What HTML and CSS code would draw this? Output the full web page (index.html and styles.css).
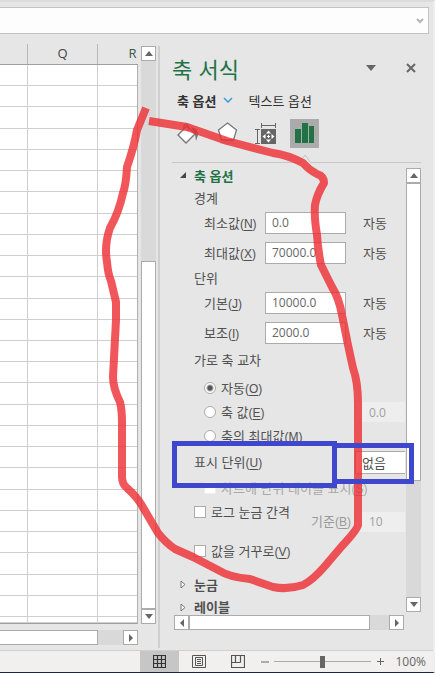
FILE: index.html
```html
<!DOCTYPE html>
<html lang="ko">
<head>
    <meta charset="UTF-8">
    <meta name="viewport" content="width=device-width, initial-scale=1.0">
    <title>축 서식</title>
    <link rel="stylesheet" href="styles.css">
</head>
<body>

    <div class="formula-bar">
        <input type="text" class="formula-input" aria-label="수식 입력줄">
        <button class="formula-toggle" aria-label="수식 입력줄 확장">
            <svg width="8" height="6" viewBox="0 0 8 6"><path d="M1 1l3 3 3-3" fill="none" stroke="#b4b4b4" stroke-width="2"/></svg>
        </button>
    </div>

    <div class="workspace">
        <div class="sheet">
            <div class="sheet-head">
                <span></span>
                <span>Q</span>
                <span class="active">R</span>
            </div>
            <div class="cells" id="cells"></div>
            <div class="scroll-x sheet-scroll-x">
                <div class="thumb sheet-thumb-x"></div>
                <button class="scroll-btn" aria-label="오른쪽"><svg width="6" height="8" viewBox="0 0 6 8"><path d="M1 0l4 4-4 4z"/></svg></button>
            </div>
        </div>

        <div class="scroll-y sheet-scroll-y">
            <button class="scroll-btn" aria-label="위로"><svg width="8" height="5" viewBox="0 0 8 5"><path d="M0 5l4-5 4 5z"/></svg></button>
            <div class="track-space"></div>
            <div class="thumb sheet-thumb-y"></div>
            <button class="scroll-btn" aria-label="아래로"><svg width="8" height="5" viewBox="0 0 8 5"><path d="M0 0l4 5 4-5z"/></svg></button>
        </div>

        <div class="pane">
            <div class="pane-title">
                <h1>축 서식</h1>
                <button class="plain" aria-label="작업창 옵션"><svg width="10" height="6" viewBox="0 0 10 6"><path d="M0 0h10l-5 6z" fill="#666"/></svg></button>
                <button class="plain" aria-label="닫기"><svg width="10" height="10" viewBox="0 0 10 10"><path d="M1 1l8 8M9 1l-8 8" stroke="#666" stroke-width="2"/></svg></button>
            </div>

            <div class="tabs">
                <button class="plain tab selected">축 옵션
                    <svg width="10" height="6" viewBox="0 0 10 6"><path d="M1 1l4 4 4-4" fill="none" stroke="#3c9bd6" stroke-width="1.5"/></svg>
                </button>
                <button class="plain tab">텍스트 옵션</button>
            </div>

            <div class="icons">
                <button class="plain icon" aria-label="채우기 및 선">
                    <svg width="25" height="25" viewBox="0 0 25 25">
                        <path d="M3 14l9-9 8 8-9 9z" fill="#fff" stroke="#777" stroke-width="1.4"/>
                        <path d="M9 8V5q2-4 4 0v5" fill="none" stroke="#777" stroke-width="1.2"/>
                        <path d="M16 6q8 2 7 8l-2 6-1-7z" fill="#777"/>
                    </svg>
                </button>
                <button class="plain icon" aria-label="효과">
                    <svg width="25" height="25" viewBox="0 0 25 25">
                        <path d="M13.500 2l9 7-3 10h-12l-3-10z" fill="#fff" stroke="#777" stroke-width="1.3"/>
                        <path d="M7 20h13l1 3H6z" fill="#cfcfcf"/>
                    </svg>
                </button>
                <button class="plain icon" aria-label="크기 및 속성">
                    <svg width="25" height="25" viewBox="0 0 25 25">
                        <path d="M8 4.500h14M8.500 2v5M22.500 2v5M4.500 9v13M2 8.500h5M2 22.500h5" fill="none" stroke="#666"/>
                        <path d="M8 8h15v15H8z" fill="#666"/>
                        <path d="M15.500 9.500l2.500 3h-5zM15.500 21.500l2.500-3h-5zM9.500 15.500l3-2.500v5zM21.500 15.500l-3-2.500v5z" fill="#fff"/>
                        <path d="M15.500 14v3M14 15.500h3" stroke="#fff"/>
                    </svg>
                </button>
                <button class="plain icon current" aria-label="축 옵션">
                    <svg width="21" height="23" viewBox="0 0 21 23"><path d="M1 7h6v14H1zM8 1h6v20H8zM15 4h5v17h-5z" fill="#217346"/></svg>
                    <svg class="notch" width="14" height="9" viewBox="0 0 14 9"><path d="M1 9l6-8 6 8" fill="#e6e6e6" stroke="#c6c6c6"/></svg>
                </button>
            </div>

            <div class="pane-body">
                <div class="options">
                    <h2 class="section open"><svg width="7" height="7" viewBox="0 0 7 7"><path d="M6 0v6H0z" fill="#444"/></svg>축 옵션</h2>

                    <h3>경계</h3>
                    <div class="field">
                        <label for="min">최소값<span class="key">(<u>N</u>)</span></label>
                        <input type="text" id="min" value="0.0">
                        <span class="mode">자동</span>
                    </div>
                    <div class="field">
                        <label for="max">최대값<span class="key">(<u>X</u>)</span></label>
                        <input type="text" id="max" value="70000.0">
                        <span class="mode">자동</span>
                    </div>

                    <h3>단위</h3>
                    <div class="field">
                        <label for="major">기본<span class="key">(<u>J</u>)</span></label>
                        <input type="text" id="major" value="10000.0">
                        <span class="mode">자동</span>
                    </div>
                    <div class="field">
                        <label for="minor">보조<span class="key">(<u>I</u>)</span></label>
                        <input type="text" id="minor" value="2000.0">
                        <span class="mode">자동</span>
                    </div>

                    <h3 class="cross">가로 축 교차</h3>
                    <div class="choice inner">
                        <input type="radio" name="cross" id="auto" checked>
                        <label for="auto">자동<span class="key">(<u>O</u>)</span></label>
                    </div>
                    <div class="choice inner">
                        <input type="radio" name="cross" id="value">
                        <label for="value">축 값<span class="key">(<u>E</u>)</span></label>
                        <input type="text" class="side" value="0.0" aria-label="축 값" disabled>
                    </div>
                    <div class="choice inner">
                        <input type="radio" name="cross" id="maximum">
                        <label for="maximum">축의 최대값<span class="key">(<u>M</u>)</span></label>
                    </div>

                    <div class="units">
                        <label for="unit">표시 단위<span class="key">(<u>U</u>)</span></label>
                        <select id="unit"><option>없음</option></select>
                    </div>
                    <div class="choice inner off">
                        <input type="checkbox" id="unitlabel" disabled>
                        <label for="unitlabel">차트에 단위 레이블 표시<span class="key">(<u>S</u>)</span></label>
                    </div>

                    <div class="log">
                        <div class="choice">
                            <input type="checkbox" id="log">
                            <label for="log">로그 눈금 간격</label>
                        </div>
                        <div class="base">
                            <label for="base">기준<span class="key">(<u>B</u>)</span></label>
                            <input type="text" class="side" id="base" value="10" disabled>
                        </div>
                    </div>
                    <div class="choice reverse">
                        <input type="checkbox" id="reverse">
                        <label for="reverse">값을 거꾸로<span class="key">(<u>V</u>)</span></label>
                    </div>

                    <h2 class="section"><svg width="6" height="9" viewBox="0 0 6 9"><path d="M1 1l4 3.500-4 3.500z" fill="#fff" stroke="#777"/></svg>눈금</h2>
                    <h2 class="section last"><svg width="6" height="9" viewBox="0 0 6 9"><path d="M1 1l4 3.500-4 3.500z" fill="#fff" stroke="#777"/></svg>레이블</h2>
                </div>

                <div class="scroll-y pane-scroll-y">
                    <button class="scroll-btn" aria-label="위로"><svg width="8" height="5" viewBox="0 0 8 5"><path d="M0 5l4-5 4 5z"/></svg></button>
                    <div class="thumb pane-thumb-y"></div>
                    <div class="track-space"></div>
                    <button class="scroll-btn" aria-label="아래로"><svg width="8" height="5" viewBox="0 0 8 5"><path d="M0 0l4 5 4-5z"/></svg></button>
                </div>
            </div>

            <div class="scroll-x pane-scroll-x">
                <button class="scroll-btn" aria-label="왼쪽"><svg width="6" height="8" viewBox="0 0 6 8"><path d="M5 0L1 4l4 4z"/></svg></button>
                <div class="thumb pane-thumb-x"></div>
                <button class="scroll-btn" aria-label="오른쪽"><svg width="6" height="8" viewBox="0 0 6 8"><path d="M1 0l4 4-4 4z"/></svg></button>
            </div>
        </div>
    </div>

    <div class="status-bar">
        <button class="plain view current" aria-label="기본">
            <svg width="13" height="13" viewBox="0 0 13 13"><path d="M.5.5h12v12H.5zM.5 4.500h12M.5 8.500h12M4.500.5v12M8.500.5v12" fill="none" stroke="#333" stroke-width="1.2"/></svg>
        </button>
        <button class="plain view" aria-label="페이지 레이아웃">
            <svg width="14" height="13" viewBox="0 0 14 13"><path d="M.5.5h13v12H.5zM3.500 2.500h7v8h-7zM5 4.500h4M5 6.500h4M5 8.500h4" fill="none" stroke="#555"/></svg>
        </button>
        <button class="plain view" aria-label="페이지 나누기 미리 보기">
            <svg width="14" height="13" viewBox="0 0 14 13"><path d="M.5.5h13v12H.5zM4.500.5v7M9.500.5v7M.5 7.500h9" fill="none" stroke="#555" stroke-width="1.2"/></svg>
        </button>
        <button class="plain zoom" aria-label="축소"><svg width="8" height="8" viewBox="0 0 8 8"><path d="M0 4h8" stroke="#666"/></svg></button>
        <input type="range" class="zoom-slider" min="0" max="200" value="100" aria-label="확대/축소">
        <button class="plain zoom" aria-label="확대"><svg width="7" height="7" viewBox="0 0 7 7"><path d="M0 3.500h7M3.500 0v7" stroke="#666"/></svg></button>
        <span class="percent">100%</span>
    </div>

    <!-- pen marks drawn over the window -->
    <svg class="marks" width="435" height="673" viewBox="0 0 435 673">
        <path class="red" d="M146 108L137 130Q134 147 127 167Q126 185 123 193Q119 212 110 228Q104 245 107 262Q108 274 111 281L116 302V320L113 377Q113 388 120 402Q122 410 122 423V477Q122 484 127 488Q136 496 141 504L158 533Q166 543 175 549L193 557L220 571Q229 577 250 579L273 587Q288 590 303 585Q313 580 325 566L342 546Q357 530 358 525V403Q358 382 353 368L348 345L342 315Q339 298 332 287L321 265Q318 250 317 235Q314 217 315 205Q317 194 324 183Q324 176 317 174Q309 170 303 163Q288 155 273 153L227 141L187 127L149 121"/>
        <rect class="blue" x="174.500" y="443.500" width="160" height="42"/>
        <rect class="blue" x="334.500" y="445.500" width="77" height="36"/>
    </svg>

    <script>
        // 27 rows x 3 visible columns
        const cells = document.getElementById("cells");
        for (let i = 0; i < 27 * 3; i++) {
            cells.appendChild(document.createElement("div"));
        }
    </script>

</body>
</html>
```
FILE: styles.css
```css
* {
    box-sizing: border-box;
}
body {
    font-family: "Noto Sans CJK KR", sans-serif;
    font-size: 13px;
    line-height: 20px;
    margin: 0;
    height: 100vh;
    min-height: 673px;
    display: flex;
    flex-direction: column;
    position: relative;
    background: #e6e6e6;
    color: #505050;
    border-top: 2px solid #dcdcdc;
    border-right: 2px solid #eceef4;
    border-bottom: 1px solid #1b2444;
    overflow: hidden;
}
button, input, select {
    font-family: inherit;
    font-size: 13px;
    color: inherit;
    margin: 0;
    padding: 0;
    border-radius: 0;
}
svg {
    display: block;
    flex: none;
}
h1, h2, h3 {
    margin: 0;
    font-weight: normal;
}
u {
    text-underline-offset: 2px;
}
label, span, h2, h3 {
    white-space: nowrap;
}
.plain {
    border: none;
    background: none;
    display: flex;
    align-items: center;
    justify-content: center;
}

/* formula bar */
.formula-bar {
    display: flex;
    height: 27px;
    margin: 5px 4px 0 0;
    background: #fdfdfd;
    border: 1px solid #c3c3c3;
    border-left: none;
}
.formula-input {
    flex: 1;
    min-width: 0;
    border: none;
    background: none;
}
.formula-toggle {
    width: 16px;
    padding: 0 4px;
    border: none;
    background: none;
}

/* sheet */
.workspace {
    flex: 1;
    display: flex;
    min-height: 0;
    padding-top: 10px;
}
.sheet {
    width: 138px;
    flex: none;
    display: flex;
    flex-direction: column;
}
.sheet-head {
    display: grid;
    grid-template-columns: 28px 70px 70px;
    height: 21px;
    overflow: hidden;
    border-bottom: 1px solid #a0a0a0;
    font-family: "Open Sans", sans-serif;
    line-height: 18px;
    text-align: center;
    color: #444;
}
.sheet-head span {
    border-right: 1px solid #b8b8b8;
}
.sheet-head .active {
    color: #3c5648;
}
.cells {
    flex: 1;
    display: grid;
    grid-template-columns: 28px 70px 1fr;
    grid-template-rows: repeat(26, 1fr) 6px;
    background: #fff;
    border-right: 1px solid #b0b0b0;
    border-bottom: 1px solid #a0a0a0;
}
.cells div {
    border-right: 1px solid #cfcfcf;
    border-bottom: 1px solid #cfcfcf;
}
.cells div:nth-child(3n) {
    border-right: none;
}

/* scroll bars */
.scroll-x, .scroll-y {
    display: flex;
    background: #d9d9d9;
}
.scroll-y {
    flex-direction: column;
    width: 15px;
    flex: none;
}
.scroll-x {
    height: 15px;
    justify-content: space-between;
}
.scroll-btn {
    width: 15px;
    height: 15px;
    flex: none;
    display: flex;
    align-items: center;
    justify-content: center;
    background: #fff;
    border: 1px solid #ababab;
    fill: #666;
}
.thumb {
    background: #fff;
    border: 1px solid #ababab;
}
.track-space {
    flex: 1;
}
.sheet-scroll-x {
    margin: 6px 0 5px;
}
.sheet-thumb-x {
    width: 98px;
    border-left: none;
}
.sheet-scroll-y {
    margin: 2px 2px 26px 3px;
}
.sheet-thumb-y {
    height: 348px;
}

/* format pane */
.pane {
    flex: 1;
    min-width: 0;
    display: flex;
    flex-direction: column;
    margin: 2px 0 2px;
    padding: 6px 12px 18px 12px;
    border-left: 2px solid #cfcfcf;
}
.pane-title {
    display: flex;
    align-items: center;
    height: 32px;
    gap: 30px;
    padding-right: 5px;
}
.pane-title h1 {
    flex: 1;
    font-size: 22px;
    line-height: 32px;
    color: #217346;
}
.tabs {
    display: flex;
    height: 20px;
    margin-top: 6px;
    padding-left: 5px;
    gap: 16px;
}
.tab {
    gap: 6px;
    color: #333;
}
.tab.selected {
    font-weight: bold;
}
.icons {
    display: flex;
    gap: 10px;
    margin-top: 9px;
    padding: 0 0 14px 1px;
    border-bottom: 1px solid #c6c6c6;
}
.icon {
    width: 29px;
    height: 29px;
    position: relative;
}
.icon.current {
    background: #ababab;
}
.notch {
    position: absolute;
    left: 8px;
    top: 35px;
}
.pane-body {
    flex: 1;
    display: flex;
    min-height: 0;
}
.options {
    flex: 1;
    min-width: 0;
    overflow: hidden;
}
.section {
    display: flex;
    align-items: center;
    height: 25px;
    padding-left: 8px;
    gap: 8px;
    font-size: 13px;
    font-weight: bold;
}
.section.open {
    gap: 7px;
    color: #217346;
}
.section.last {
    height: 20px;
}
h3 {
    height: 20px;
    padding-left: 22px;
    font-size: 13px;
}
.key {
    font-family: "Liberation Sans", sans-serif;
    font-size: 12px;
}
.cross {
    line-height: 24px;
    height: 28px;
}
.field {
    display: grid;
    grid-template-columns: 61px 81px auto;
    align-items: center;
    height: 30px;
    padding-left: 32px;
}
.mode {
    padding-left: 17px;
}
input[type="text"] {
    font-family: "Open Sans", sans-serif;
    font-size: 12px;
}
.field input {
    height: 22px;
    padding: 0 6px 2px;
    background: #fff;
    border: 1px solid #ababab;
    color: #666;
}
.choice {
    display: flex;
    align-items: center;
    height: 24px;
    padding-left: 22px;
    gap: 5px;
}
.choice.inner {
    padding-left: 32px;
}
.side {
    width: 48px;
    height: 20px;
    margin-left: auto;
    padding: 0 12px;
    border: none;
    background: #eee;
    color: #a0a0a0;
}
input[type="radio"], input[type="checkbox"] {
    appearance: none;
    flex: none;
    width: 12px;
    height: 12px;
    background: #fff;
    border: 1px solid #ababab;
}
input[type="radio"] {
    border-radius: 50%;
}
input[type="radio"]:checked {
    background: radial-gradient(circle, #555 2px, #fff 4px);
}
.off {
    color: #a8a8a8;
}
.off input[type="checkbox"] {
    border-color: #eee;
}
.units {
    display: flex;
    align-items: center;
    justify-content: space-between;
    height: 28px;
    padding-left: 22px;
}
.units select {
    appearance: none;
    width: 50px;
    height: 23px;
    padding-left: 6px;
    background: #fff;
    border: 1px solid #ababab;
    border-right: none;
}
.log {
    display: flex;
    justify-content: space-between;
    align-items: flex-start;
    height: 39px;
}
.base {
    display: flex;
    align-items: center;
    gap: 6px;
    padding-top: 11px;
    color: #999;
}
.reverse {
    margin-bottom: 9px;
}
.pane-scroll-y {
    margin: 5px 0 3px 1px;
}
.pane-thumb-y {
    height: 298px;
}
.pane-scroll-x {
    margin: 0 17px 0 2px;
}
.pane-thumb-x {
    width: 181px;
    margin-right: auto;
}

/* status bar */
.status-bar {
    display: flex;
    align-items: center;
    justify-content: flex-end;
    height: 22px;
    padding-right: 7px;
    background: #f1f0ee;
    border-top: 1px solid #d0d0d0;
}
.view {
    width: 39px;
    height: 21px;
}
.view.current {
    background: #c6c6c6;
}
.zoom {
    width: 15px;
    height: 21px;
}
.zoom-slider {
    appearance: none;
    width: 97px;
    height: 12px;
    margin: 0 2px;
    background: linear-gradient(#aaa, #aaa) center / 100% 1px no-repeat;
}
.zoom-slider::-webkit-slider-thumb {
    appearance: none;
    width: 5px;
    height: 12px;
    background: #666;
}
.percent {
    width: 38px;
    font-family: "Open Sans", sans-serif;
    font-size: 12px;
    text-align: right;
    color: #666;
}

/* pen marks */
.marks {
    position: absolute;
    left: 0;
    top: -2px;
    pointer-events: none;
}
.red {
    fill: none;
    stroke: #ed2c32;
    stroke-opacity: .8;
    stroke-width: 8;
    stroke-linejoin: round;
}
.blue {
    fill: none;
    stroke: #3f48cc;
    stroke-width: 5;
}
```
